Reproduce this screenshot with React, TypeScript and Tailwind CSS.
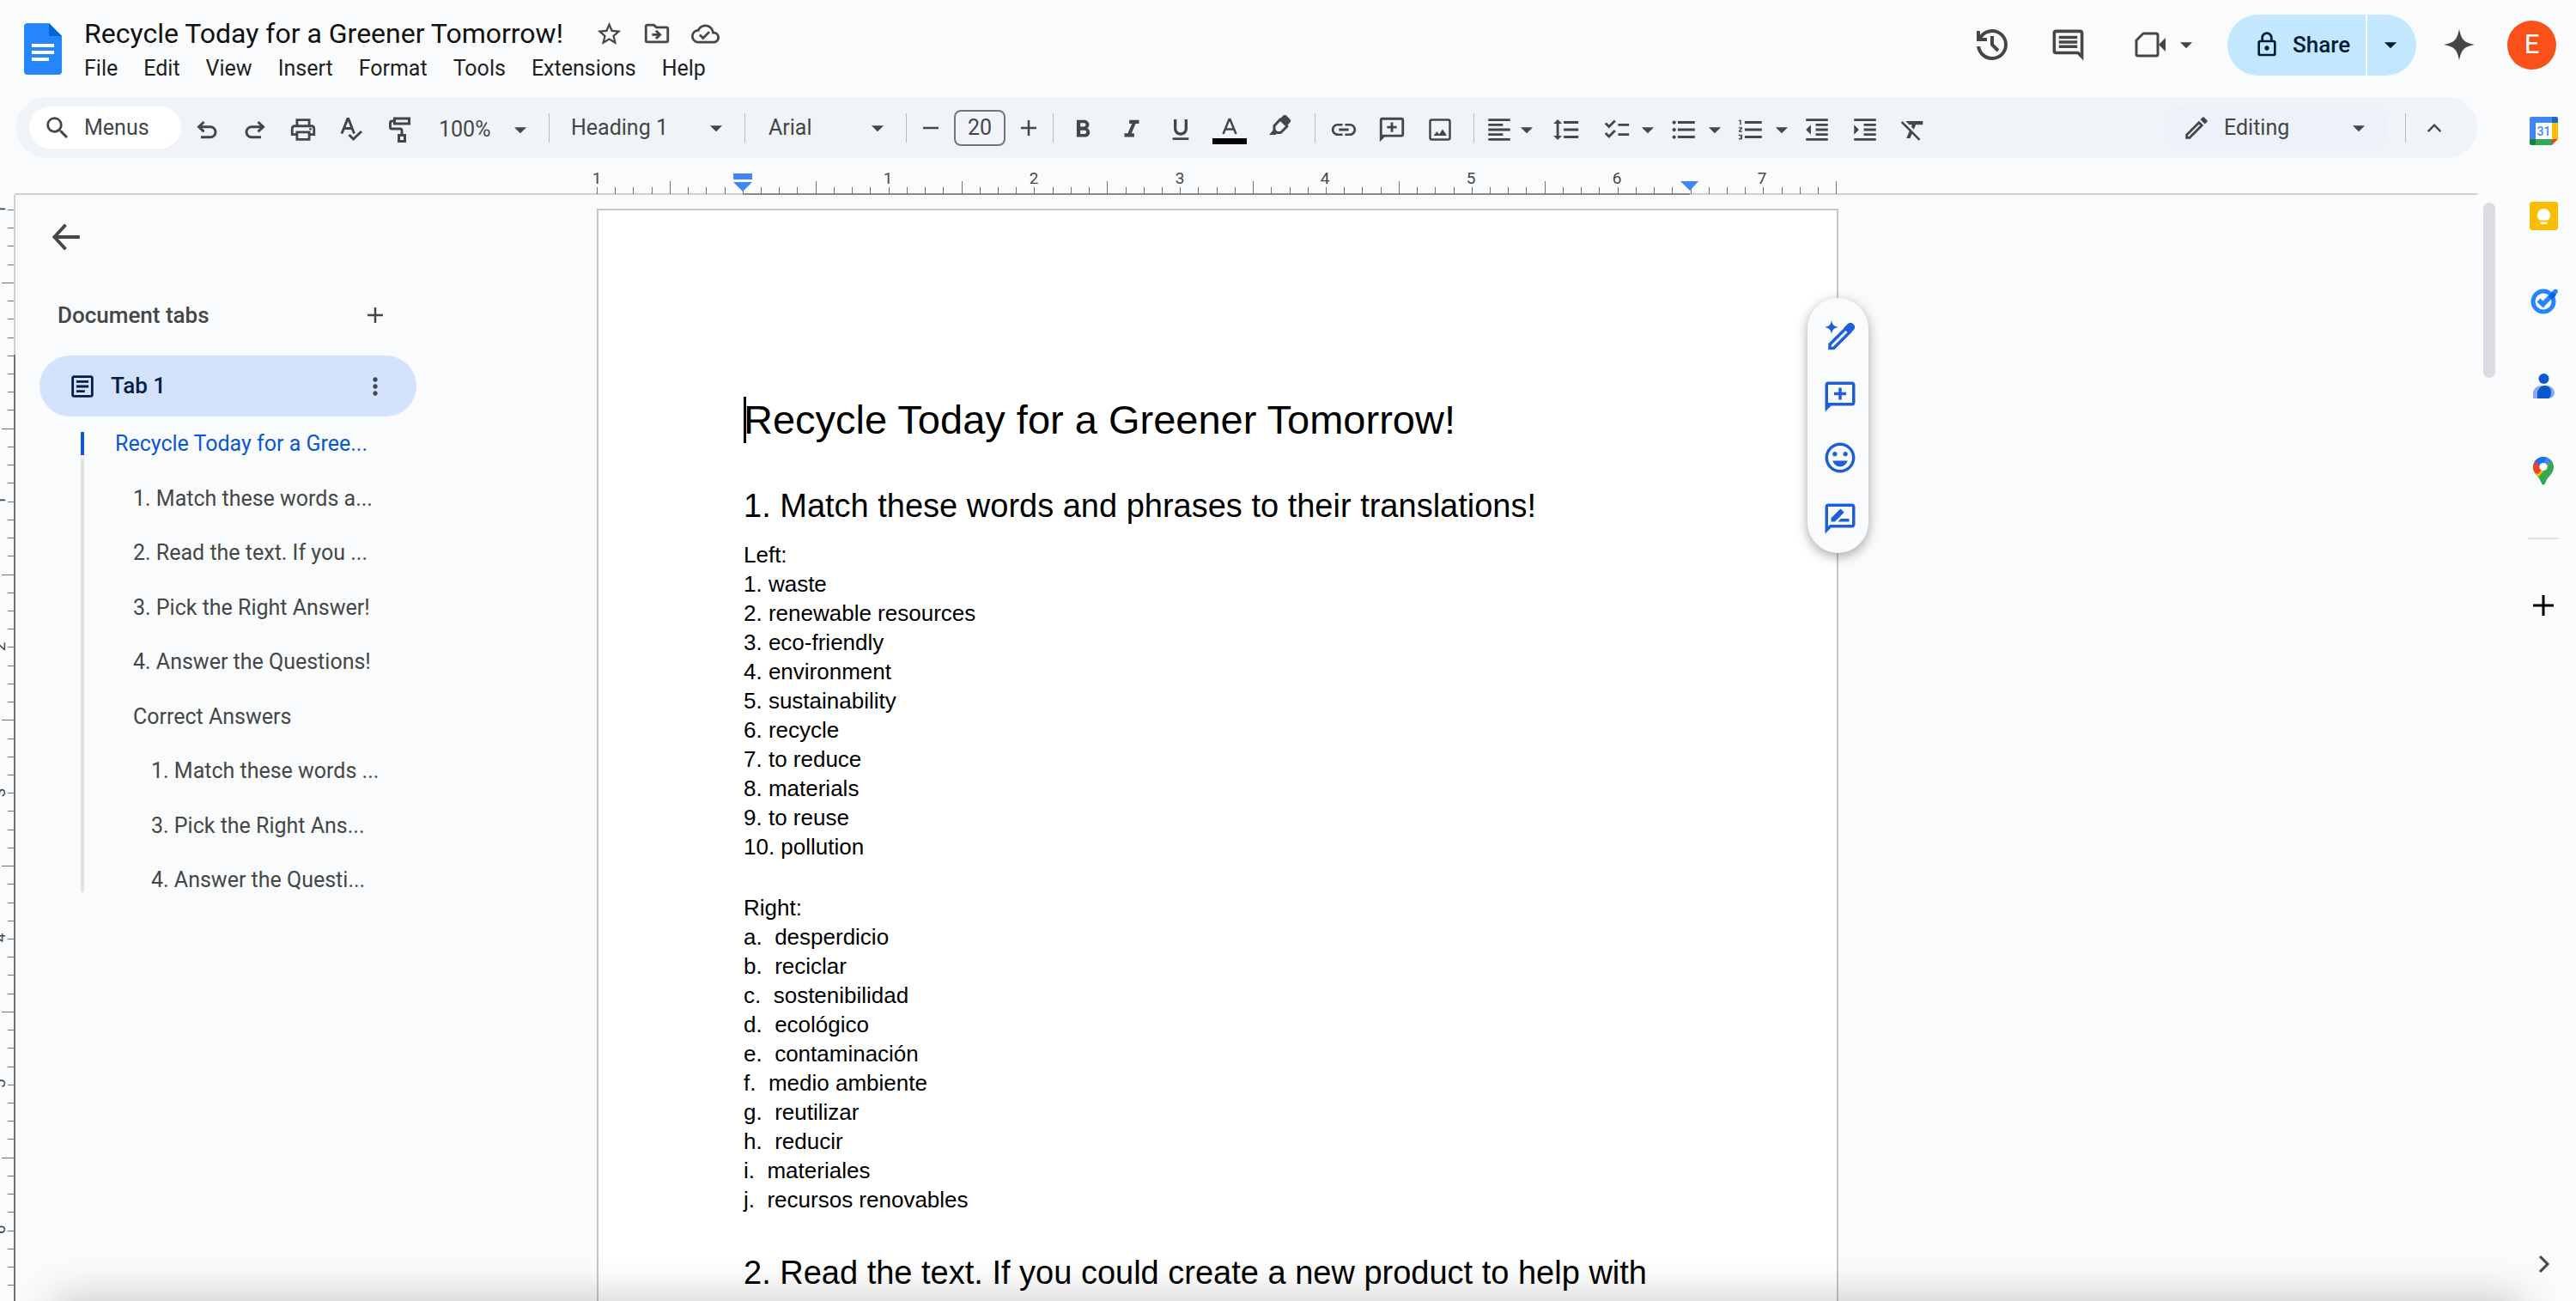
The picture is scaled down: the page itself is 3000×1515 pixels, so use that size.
import React from "react";
import type { ReactNode } from "react";
import {
  MdArrowDropDown,
  MdFormatAlignLeft,
  MdFormatBold,
  MdFormatClear,
  MdFormatIndentDecrease,
  MdFormatIndentIncrease,
  MdFormatItalic,
  MdFormatLineSpacing,
  MdFormatListBulleted,
  MdFormatListNumbered,
  MdFormatUnderlined,
  MdChecklist,
  MdLink,
  MdMoreVert,
  MdOutlineArticle,
  MdOutlineDriveFileMove,
  MdOutlineCloudDone,
  MdOutlineEdit,
  MdOutlineInsertComment,
  MdOutlineLock,
  MdOutlinePrint,
  MdOutlineRateReview,
  MdSearch,
  MdSentimentVerySatisfied,
  MdStarBorder,
} from "react-icons/md";

const INCH = 170;

/* ---------- icons ---------- */

function Stroke({ d, className = "size-8", width = 3, box = "0 0 32 32" }: { d: string; className?: string; width?: number; box?: string }) {
  return (
    <svg viewBox={box} className={className} fill="none" stroke="currentColor" strokeWidth={width} aria-hidden="true">
      <path d={d} />
    </svg>
  );
}

function DocsLogo() {
  return (
    <svg viewBox="0 0 44 60" className="h-[60px] w-11" aria-hidden="true">
      <path fill="#2684fc" d="M4 0h25l15 15v41a4 4 0 0 1-4 4H4a4 4 0 0 1-4-4V4a4 4 0 0 1 4-4z" />
      <path fill="#0066da" d="M29 0l15 15H29z" />
      <path fill="#fff" d="M9 24h26v4H9zM9 32h26v4H9zM9 40h20v4H9z" />
    </svg>
  );
}

function HistoryIcon() {
  return (
    <svg viewBox="0 -960 960 960" className="size-12" fill="currentColor" aria-hidden="true">
      <path d="M480-120q-138 0-240.500-91.500T122-440h82q14 104 92.500 172T480-200q117 0 198.500-81.500T760-480q0-117-81.500-198.500T480-760q-69 0-129 32t-101 88h110v80H120v-240h80v94q51-64 124.500-99T480-840q75 0 140.500 28.500t114 77q48.500 48.500 77 114T840-480q0 75-28.500 140.500t-77 114q-48.500 48.500-114 77T480-120Zm112-192L440-464v-216h80v184l128 128-56 56Z" />
    </svg>
  );
}

function MeetIcon() {
  return (
    <svg viewBox="0 0 36 32" className="h-8 w-9" aria-hidden="true">
      <path d="M10 3h15a2 2 0 0 1 2 2v22a2 2 0 0 1-2 2H4a2 2 0 0 1-2-2V11z" fill="none" stroke="currentColor" strokeWidth="3" strokeLinejoin="round" />
      <path d="M28 16l8-8v16z" fill="currentColor" />
    </svg>
  );
}

function SparkIcon() {
  return (
    <svg viewBox="0 0 36 36" className="size-9" fill="currentColor" aria-hidden="true">
      <path d="M18 0c1.500 6.500 2.500 9.500 5 12.500 3 3 6.500 4 13 5.500-6.500 1.500-10 2.500-13 5.500-2.500 3-3.500 6-5 12.500-1.500-6.500-2.500-9.500-5-12.500C10 20.500 6.500 19.500 0 18c6.500-1.500 10-2.500 13-5.500 2.500-3 3.500-6 5-12.500z" />
    </svg>
  );
}

function TextColorIcon() {
  return (
    <svg viewBox="0 0 40 34" className="h-[34px] w-10" aria-hidden="true">
      <path d="M12.500 22L19.500 5h1L27.500 22M15 16.500h10" fill="none" stroke="currentColor" strokeWidth="2.500" />
      <path d="M0 27h40v7H0z" fill="#000" />
    </svg>
  );
}

function HighlighterIcon() {
  return (
    <svg viewBox="0 0 32 32" className="size-8" aria-hidden="true">
      <path d="M17 8l8 8-7.500 7.500h-4.500L10 20.500V15.500z" fill="none" stroke="currentColor" strokeWidth="3" strokeLinejoin="round" />
      <path d="M16 8l4.500-4.500a2.500 2.500 0 0 1 3.500 0l4.500 4.500a2.500 2.500 0 0 1 0 3.500L24 16z" fill="currentColor" />
      <path d="M10 19l4 4-2.500 3H4z" fill="currentColor" />
    </svg>
  );
}

function AddCommentIcon({ className }: { className: string }) {
  return (
    <svg viewBox="0 0 24 24" className={className} fill="currentColor" aria-hidden="true">
      <path d="M20 2H4c-1.100 0-2 .9-2 2v18l4-4h14c1.100 0 2-.9 2-2V4c0-1.100-.9-2-2-2zm0 14H4V4h16v12zM11 14h2v-3h3V9h-3V6h-2v3H8v2h3z" />
    </svg>
  );
}

function ImageIcon() {
  return (
    <svg viewBox="0 0 32 32" className="size-8" aria-hidden="true">
      <rect x="4.500" y="4.500" width="23" height="23" rx="2" fill="none" stroke="currentColor" strokeWidth="2.500" />
      <path d="M8.500 23l4-5 2.500 3.500 4-6 5 7.500z" fill="currentColor" />
    </svg>
  );
}

function MagicPencilIcon() {
  return (
    <svg viewBox="0 0 36 36" className="size-9" aria-hidden="true">
      <path d="M6 28L24.500 9.500 29 14 10.500 32.500H6z" fill="none" stroke="currentColor" strokeWidth="3.500" />
      <path d="M22.500 8.500l4-4a4.500 4.500 0 0 1 7 0 4.500 4.500 0 0 1 0 7l-4 4z" fill="currentColor" />
      <path d="M8 0c1 5 2.500 7 8 8-5.500 1-7 3-8 8-1-5-2.500-7-8-8 5.500-1 7-3 8-8z" fill="currentColor" />
    </svg>
  );
}

function CalendarIcon() {
  return (
    <svg viewBox="0 0 33 33" className="size-[33px]" aria-hidden="true">
      <path fill="#4285f4" d="M2 0h24v7H7v19H0V2a2 2 0 0 1 2-2z" />
      <path fill="#1967d2" d="M26 0h5a2 2 0 0 1 2 2v5h-7z" />
      <path fill="#fbbc04" d="M26 7h7v19h-7z" />
      <path fill="#34a853" d="M7 26h19v7H7z" />
      <path fill="#188038" d="M0 26h7v7H2a2 2 0 0 1-2-2z" />
      <path fill="#ea4335" d="M26 26h7l-7 7z" />
      <path fill="#fff" d="M7 7h19v19H7z" />
      <text x="16.500" y="21.500" textAnchor="middle" fontSize="14" fontFamily="Roboto, sans-serif" fontWeight="500" fill="#4285f4">31</text>
    </svg>
  );
}

function KeepIcon() {
  return (
    <svg viewBox="0 0 33 33" className="size-[33px]" aria-hidden="true">
      <rect width="33" height="33" rx="3" fill="#fbbc04" />
      <path fill="#fff" d="M16.500 8a7.500 7.500 0 0 1 4.500 13.500h-9A7.500 7.500 0 0 1 16.500 8zM12.500 23.500h8V26h-8z" />
    </svg>
  );
}

function TasksIcon() {
  return (
    <svg viewBox="0 0 33 33" className="size-[33px]" aria-hidden="true">
      <circle cx="16" cy="17" r="12" fill="none" stroke="#2684fc" strokeWidth="5" />
      <path d="M10.500 15.500l5 5L29 6.500" fill="none" stroke="#2684fc" strokeWidth="5.500" />
      <path d="M22 11l5.500-5.500 3.500 4-5 5.500z" fill="#0066da" />
      <circle cx="30" cy="5.500" r="2.800" fill="#2684fc" />
    </svg>
  );
}

function ContactsIcon() {
  return (
    <svg viewBox="0 0 33 33" className="size-[33px]" aria-hidden="true">
      <path fill="#85a9f7" d="M4 31v-6a9 9 0 0 1 9-9h7a9 9 0 0 1 9 8c0 4-3 7-7 7z" />
      <path fill="#0b57d0" d="M9 31v-6a9 9 0 0 1 8-9c5 0 8 3 8 8 0 3-1 6-3 7z" />
      <circle cx="16.500" cy="8" r="6" fill="#0b57d0" />
    </svg>
  );
}

function MapsIcon() {
  return (
    <svg viewBox="0 0 24 33" className="h-[33px] w-6" aria-hidden="true">
      <clipPath id="pin">
        <path d="M12 0a12 12 0 0 1 12 12c0 8-7 10-10 19-.7 2-3.300 2-4 0C7 22 0 20 0 12A12 12 0 0 1 12 0z" />
      </clipPath>
      <g clipPath="url(#pin)">
        <path fill="#34a853" d="M0 0h24v33H0z" />
        <path fill="#fbbc04" d="M12 12L-2 12l0 16 8-4 14-17z" />
        <path fill="#ea4335" d="M12 12L3 3l-6 8 3 7 6 2z" />
        <path fill="#1a73e8" d="M2 5l8 7 8-12H4z" />
        <path fill="#4285f4" d="M16 0l-6 12 5 0 7-8z" />
      </g>
      <circle cx="12" cy="11.500" r="4.600" fill="#fff" />
    </svg>
  );
}

/* ---------- toolbar parts ---------- */

function Tool({ label, children, className = "w-14" }: { label: string; children: ReactNode; className?: string }) {
  return (
    <button aria-label={label} className={`flex h-14 shrink-0 items-center justify-center ${className}`}>
      {children}
    </button>
  );
}

function Divider({ className = "mx-[11px]" }: { className?: string }) {
  return <span className={`h-[34px] w-px shrink-0 bg-[#b8bbbe] ${className}`} />;
}

function Picker({ label, value, className, inset }: { label: string; value: string; className: string; inset: string }) {
  return (
    <label className={`relative flex h-[51px] shrink-0 items-center ${className}`}>
      <span className="sr-only">{label}</span>
      <select defaultValue={value} className={`h-full w-full appearance-none bg-transparent outline-none ${inset}`}>
        <option>{value}</option>
      </select>
      <MdArrowDropDown className="pointer-events-none absolute right-[5px] size-[34px]" />
    </label>
  );
}

function ListTool({ label, children }: { label: string; children: ReactNode }) {
  return (
    <span className="flex pt-1">
      <Tool label={label} className="w-[37px]">{children}</Tool>
      <Tool label={`${label} options`} className="w-9">
        <MdArrowDropDown className="size-[34px] shrink-0" />
      </Tool>
    </span>
  );
}

function Toolbar() {
  return (
    <div role="toolbar" aria-label="Formatting" className="mr-[39px] ml-[19px] flex h-[71px] items-center rounded-full bg-[#f0f4f9] text-[25px] text-[#444746]">
      <label className="ml-[15px] flex h-[49px] w-[177px] shrink-0 items-center gap-[14px] rounded-full bg-white pl-4">
        <MdSearch className="size-[34px] shrink-0" />
        <input aria-label="Search the menus" placeholder="Menus" className="w-24 bg-transparent outline-none placeholder:text-[#444746]" />
      </label>
      <div className="ml-0.5 flex pt-1">
        <Tool label="Undo"><Stroke d="M12.500 7L6.500 12.700 12.500 18.400M7 12.700H20a6 6 0 0 1 0 12H9" /></Tool>
        <Tool label="Redo"><Stroke d="M19.500 7L25.500 12.700 19.500 18.400M25 12.700H12a6 6 0 0 0 0 12H23" /></Tool>
        <Tool label="Print"><MdOutlinePrint className="size-[34px]" /></Tool>
        <Tool label="Spelling and grammar check"><Stroke d="M5 20.500L11.800 3.500h1L19.500 20.500M8 14.500h9M13.500 22l5 5L28 18" /></Tool>
        <Tool label="Paint format"><Stroke d="M10.500 3h17v6h-17zM10 6H7.500a2 2 0 0 0-2 2v5a2 2 0 0 0 2 2H17a2 2 0 0 1 2 2V22M15.500 22.500h7v7h-7z" /></Tool>
      </div>
      <Picker label="Zoom" value="100%" className="w-[135px] pt-1" inset="pl-[18px]" />
      <Divider />
      <Picker label="Styles" value="Heading 1" className="w-[205px]" inset="pl-[14px]" />
      <Divider />
      <Picker label="Font" value="Arial" className="w-[165px]" inset="pl-[16px]" />
      <Divider />
      <Tool label="Decrease font size" className="w-[34px]"><Stroke width={2.5} d="M7 16H25" /></Tool>
      <input aria-label="Font size" defaultValue="20" className="mx-[10px] h-[42px] w-[60px] shrink-0 rounded-lg border-2 border-[#747775] bg-transparent text-center" />
      <Tool label="Increase font size" className="w-[34px]"><Stroke width={2.5} d="M7 16H25M16 7V25" /></Tool>
      <Divider />
      <div className="-ml-1.5 flex pt-1">
        <Tool label="Bold" className="w-[57px]"><MdFormatBold className="size-[34px]" /></Tool>
        <Tool label="Italic" className="w-[57px]"><MdFormatItalic className="size-[34px]" /></Tool>
        <Tool label="Underline" className="w-[57px]"><MdFormatUnderlined className="size-8" /></Tool>
        <Tool label="Text colour" className="w-[57px]"><TextColorIcon /></Tool>
        <Tool label="Highlight colour" className="w-[60px] pb-2"><HighlighterIcon /></Tool>
      </div>
      <Divider />
      <div className="-ml-1.5 flex pt-1">
        <Tool label="Insert link"><MdLink className="size-[34px]" /></Tool>
        <Tool label="Add comment"><AddCommentIcon className="size-[34px]" /></Tool>
        <Tool label="Insert image"><ImageIcon /></Tool>
      </div>
      <Divider />
      <div className="flex pt-1">
        <Tool label="Align" className="w-9"><MdFormatAlignLeft className="size-[34px] shrink-0" /></Tool>
        <Tool label="Align options" className="w-7"><MdArrowDropDown className="size-[34px] shrink-0" /></Tool>
        <Tool label="Line spacing" className="w-16"><MdFormatLineSpacing className="size-[34px]" /></Tool>
      </div>
      <div className="ml-2 flex gap-[5px]">
        <ListTool label="Checklist"><MdChecklist className="size-[34px] shrink-0" /></ListTool>
        <ListTool label="Bulleted list"><MdFormatListBulleted className="size-[34px] shrink-0" /></ListTool>
        <ListTool label="Numbered list"><MdFormatListNumbered className="size-[34px] shrink-0" /></ListTool>
      </div>
      <div className="-ml-[5px] flex pt-1">
        <Tool label="Decrease indent"><MdFormatIndentDecrease className="size-[34px]" /></Tool>
        <Tool label="Increase indent"><MdFormatIndentIncrease className="size-[34px]" /></Tool>
        <Tool label="Clear formatting"><MdFormatClear className="size-[34px]" /></Tool>
      </div>
      <div className="ml-auto flex items-center rounded-full bg-[#edf1fa] pr-3 pl-5">
        <MdOutlineEdit className="size-[34px]" />
        <Picker label="Mode" value="Editing" className="w-[194px]" inset="pl-[15px]" />
      </div>
      <Divider className="mx-5" />
      <Tool label="Hide the menus" className="mr-[37px] w-[26px]"><Stroke d="M7 21L16 12l9 9" /></Tool>
    </div>
  );
}

/* ---------- header ---------- */

const menus = ["File", "Edit", "View", "Insert", "Format", "Tools", "Extensions", "Help"];

function Header() {
  return (
    <header className="flex h-[113px] justify-between text-[#444746]">
      <div className="flex pl-7">
        <a href="#home" aria-label="Docs home" className="pt-[27px]"><DocsLogo /></a>
        <div className="ml-[26px] pt-[19px]">
          <div className="flex h-10 items-center">
            <input aria-label="Document title" defaultValue="Recycle Today for a Greener Tomorrow!" className="w-[583px] bg-transparent text-[32px] text-[#111] outline-none" />
            <button aria-label="Star" className="flex w-14 justify-center"><MdStarBorder className="size-[33px]" /></button>
            <button aria-label="Move" className="flex w-14 justify-center"><MdOutlineDriveFileMove className="size-[34px]" /></button>
            <button aria-label="Document status" className="flex w-14 justify-center"><MdOutlineCloudDone className="size-[33px]" /></button>
          </div>
          <nav className="mt-[5px] flex gap-[30px] text-[25px] leading-8 text-[#1f1f1f]">
            {menus.map((m) => (
              <button key={m}>{m}</button>
            ))}
          </nav>
        </div>
      </div>
      <div className="flex h-[104px] items-center pr-[23px]">
        <button aria-label="Version history" className="flex w-14 justify-center"><HistoryIcon /></button>
        <button aria-label="Comments" className="ml-8 flex w-14 justify-center"><MdOutlineInsertComment className="size-[43px]" /></button>
        <button aria-label="Join a call" className="ml-10 flex w-14 justify-center"><MeetIcon /></button>
        <button aria-label="Call options" className="mr-[34px] flex w-7 justify-center"><MdArrowDropDown className="size-[34px] shrink-0" /></button>
        <div className="flex h-[71px] overflow-hidden rounded-full bg-[#c2e7ff] text-[#001d35]">
          <button className="flex w-[161px] items-center gap-[14px] pl-[30px] text-[26px] font-medium"><MdOutlineLock className="size-8" />Share</button>
          <button aria-label="Share options" className="flex w-[59px] items-center justify-center border-l-2 border-white pr-1"><MdArrowDropDown className="size-[34px]" /></button>
        </div>
        <button aria-label="Ask Gemini" className="mr-[38px] ml-8"><SparkIcon /></button>
        <button aria-label="Account" className="size-[57px] rounded-full bg-[#fa5019] text-[31px] text-white">E</button>
      </div>
    </header>
  );
}

/* ---------- rulers ---------- */

const eighths = (from: number, to: number) => Array.from({ length: to - from + 1 }, (_, i) => from + i);

function TopRuler() {
  return (
    <div className="mr-[39px] ml-[17px] flex h-[43px] border-b-2 border-[#cfd2d5]">
      <svg className="-mb-0.5 ml-[678px] h-[43px] w-[1480px] shrink-0 overflow-visible" aria-hidden="true">
        <path d={`M170 42H${INCH * 7.5 - 2}`} stroke="#8a8d90" strokeWidth="2" />
        {eighths(0, 68).map((n) => {
          const x = Math.round((n * INCH) / 8 - n / 40);
          return <path key={n} d={`M${x + 0.5} ${n % 8 === 4 ? 27 : 34}V42`} stroke="#6f7275" />;
        })}
        {[1, 0, 1, 2, 3, 4, 5, 6, 7].map((n, i) =>
          n ? (
            <text key={i} x={Math.round(i * INCH - i / 3)} y="30" textAnchor="middle" fontSize="19" fontFamily="Roboto, sans-serif" fill="#444746">
              {n}
            </text>
          ) : null,
        )}
        <path d="M159 18h22v7h-22zM159 28h22l-11 11z" fill="#4285f4" />
        <path d="M1262 27h21l-10 11z" fill="#4285f4" />
      </svg>
    </div>
  );
}

function SideRuler() {
  return (
    <div className="relative w-[18px] shrink-0 overflow-hidden">
      <svg className="absolute inset-0 h-full w-full" aria-hidden="true">
        <path d="M17 0V186" stroke="#cfd2d5" strokeWidth="2" />
        <path d="M17 186V1300" stroke="#6f7275" strokeWidth="2" />
        {eighths(0, 60).map((n) => {
          const y = Math.round(17 + (n * INCH) / 8 - n / 40);
          return <path key={n} d={`M${n % 8 === 4 ? 2 : 9} ${y + 0.5}H16`} stroke="#6f7275" />;
        })}
        {[1, 0, 1, 2, 3, 4, 5, 6].map((n, i) =>
          n ? (
            <text key={i} transform={`translate(6 ${17 + Math.round(i * INCH - i / 3)}) rotate(-90)`} textAnchor="middle" fontSize="19" fontFamily="Roboto, sans-serif" fill="#444746">
              {n}
            </text>
          ) : null,
        )}
      </svg>
    </div>
  );
}

/* ---------- outline ---------- */

const outline: [string, string][] = [
  ["Recycle Today for a Gree...", "pl-10 text-[#0b57d0]"],
  ["1. Match these words a...", "pl-[61px]"],
  ["2. Read the text. If you ...", "pl-[61px]"],
  ["3. Pick the Right Answer!", "pl-[61px]"],
  ["4. Answer the Questions!", "pl-[61px]"],
  ["Correct Answers", "pl-[61px]"],
  ["1. Match these words ...", "pl-[82px]"],
  ["3. Pick the Right Ans...", "pl-[82px]"],
  ["4. Answer the Questi...", "pl-[82px]"],
];

function Outline() {
  return (
    <aside className="w-[677px] shrink-0 text-[25px] text-[#444746]">
      <button aria-label="Close outline" className="mt-[29px] ml-[39px] block p-0.5">
        <Stroke width={3.5} className="size-9" d="M15 3L3 16l12 13M3 16h27" box="-1 0 33 32" />
      </button>
      <div className="mt-[35px] flex h-[72px] w-[431px] items-center justify-between pl-[49px] text-[26px] font-medium">
        <h2>Document tabs</h2>
        <button aria-label="Add tab" className="-mr-1"><Stroke width={2.5} d="M7 16H25M16 7V25" /></button>
      </div>
      <div className="mt-[11px] ml-7 flex h-[71px] w-[439px] items-center rounded-full bg-[#d3e3fd] text-[26px] font-medium text-[#041e49]">
        <MdOutlineArticle className="ml-[33px] size-[34px]" />
        <button className="ml-[16px]">Tab 1</button>
        <button aria-label="Tab options" className="mr-8 ml-auto text-[#444746]"><MdMoreVert className="size-8" /></button>
      </div>
      <nav className="relative">
        <span className="absolute top-[18px] left-[76px] h-[27px] w-1 bg-[#0b57d0]" />
        <span className="absolute top-[49px] bottom-[18px] left-[76px] w-1 bg-[#e1e3e6]" />
        <ul className="ml-[76px] grid h-[572px] auto-rows-fr">
          {outline.map(([text, cls]) => (
            <li key={text} className={`flex items-center ${cls}`}>
              <a href="#document">{text}</a>
            </li>
          ))}
        </ul>
      </nav>
    </aside>
  );
}

/* ---------- document ---------- */

const left = ["Left:", "1. waste", "2. renewable resources", "3. eco-friendly", "4. environment", "5. sustainability", "6. recycle", "7. to reduce", "8. materials", "9. to reuse", "10. pollution"];
const right = ["Right:", "a.  desperdicio", "b.  reciclar", "c.  sostenibilidad", "d.  ecológico", "e.  contaminación", "f.  medio ambiente", "g.  reutilizar", "h.  reducir", "i.  materiales", "j.  recursos renovables"];

function Page() {
  return (
    <article id="document" className="relative mt-4 w-[1446px] shrink-0 border-2 border-b-0 border-[#c4c6c8] bg-white pt-[217px] pl-[169px] font-['Liberation_Sans',Arial,sans-serif] text-[26px] leading-[34px] whitespace-pre text-black">
      <h1 className="relative text-[47px] leading-[54px]">
        <span className="absolute top-0 left-0 h-[54px] w-[3px] bg-black" />
        Recycle Today for a Greener Tomorrow!
      </h1>
      <h2 className="mt-[51px] text-[38px] leading-[44px]">1. Match these words and phrases to their translations!</h2>
      <div className="mt-[18px]">
        {left.map((t) => <p key={t}>{t}</p>)}
      </div>
      <div className="mt-[37px]">
        {right.map((t) => <p key={t}>{t}</p>)}
      </div>
      <h2 className="mt-[46px] text-[38px] leading-[44px]">2. Read the text. If you could create a new product to help with</h2>
      <div className="absolute top-[102px] -right-[37px] flex w-[71px] flex-col rounded-full bg-[#f9fbfd] pt-2 pb-[5px] text-[#1f5fd6] shadow-[0_4px_14px_rgba(0,0,0,0.35)]">
        <Tool label="Help me write" className="h-[71px] w-[71px] pl-1"><MagicPencilIcon /></Tool>
        <Tool label="Add comment" className="h-[71px] w-[71px] pl-1"><AddCommentIcon className="size-[42px]" /></Tool>
        <Tool label="Add emoji reaction" className="h-[71px] w-[71px] pl-1"><MdSentimentVerySatisfied className="size-[42px]" /></Tool>
        <Tool label="Suggest edits" className="h-[71px] w-[71px] pl-1"><MdOutlineRateReview className="size-[42px]" /></Tool>
      </div>
    </article>
  );
}

function SidePanel() {
  return (
    <aside className="flex w-[76px] shrink-0 flex-col items-center pt-[23px] pb-[27px]">
      <div className="flex flex-col items-center gap-[66px]">
        <button aria-label="Calendar"><CalendarIcon /></button>
        <button aria-label="Keep"><KeepIcon /></button>
        <button aria-label="Tasks"><TasksIcon /></button>
        <button aria-label="Contacts"><ContactsIcon /></button>
        <button aria-label="Maps"><MapsIcon /></button>
      </div>
      <span className="mt-[61px] h-0.5 w-9 bg-[#e1e3e6]" />
      <button aria-label="Get add-ons" className="mt-[61px] text-black"><Stroke d="M4 16H28M16 4V28" /></button>
      <button aria-label="Hide side panel" className="mt-auto text-[#444746]"><Stroke d="M12 7l9 9-9 9" /></button>
    </aside>
  );
}

export default function App() {
  return (
    <div className="relative flex h-screen flex-col overflow-hidden bg-[#f9fbfd] font-[Roboto,sans-serif]">
      <Header />
      <div className="flex min-h-0 flex-1">
        <main className="flex min-w-0 flex-1 flex-col">
          <Toolbar />
          <TopRuler />
          <div className="flex min-h-0 flex-1 overflow-hidden">
            <SideRuler />
            <Outline />
            <Page />
            <span className="mt-[9px] mr-[18px] ml-auto h-[204px] w-[14px] shrink-0 rounded-full bg-[#dadce0]" />
          </div>
        </main>
        <SidePanel />
      </div>
      <div className="pointer-events-none absolute inset-x-16 top-full h-10 shadow-[0_0_50px_rgba(0,0,0,0.25)]" />
    </div>
  );
}
